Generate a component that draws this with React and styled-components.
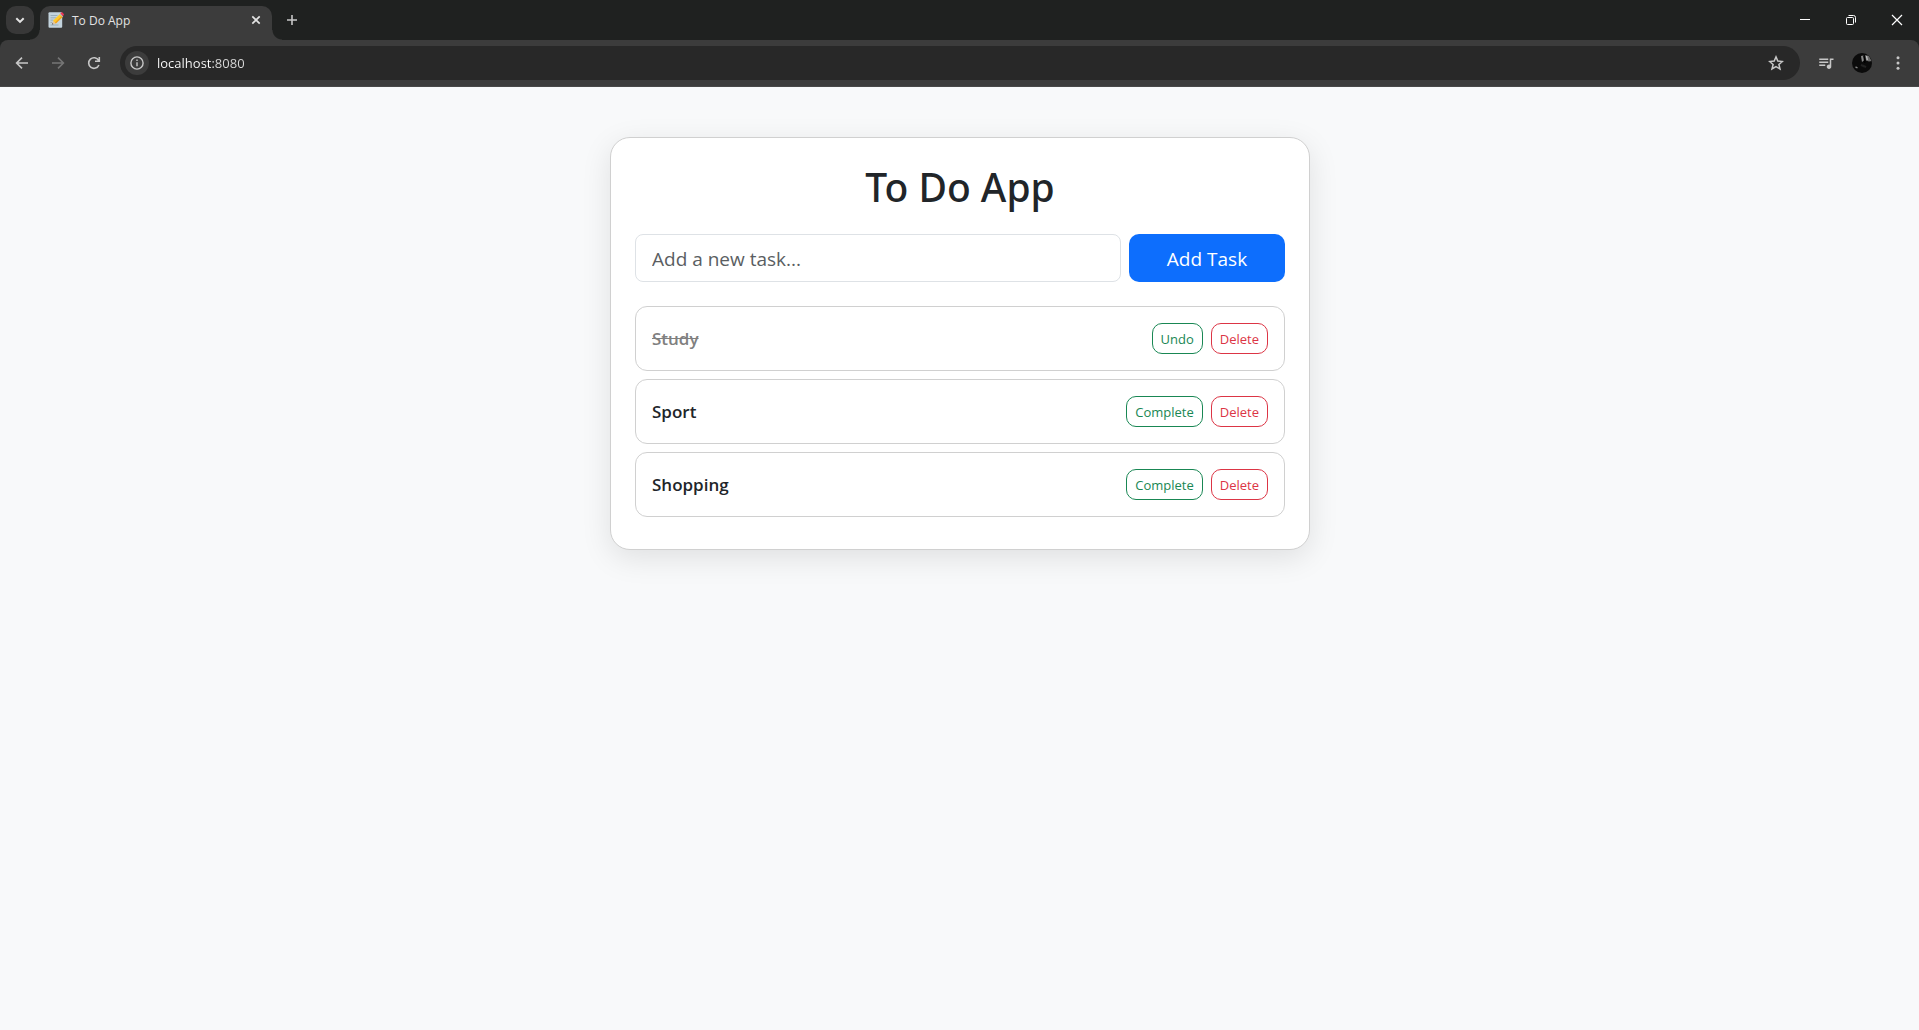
import React, { useState } from "react";
import styled, { createGlobalStyle, css } from "styled-components";
import { MdQueueMusic } from "react-icons/md";

const GlobalStyle = createGlobalStyle`
  *, *::before, *::after { box-sizing: border-box; }
  body {
    margin: 0;
    background: #f8f9fa;
    color: #212529;
    font-family: "Open Sans", "Noto Sans", sans-serif;
    font-size: 16px;
    line-height: 24px;
  }
  button, input { font-family: inherit; margin: 0; }
`;

const STRIP = "#1f2120";
const BAR = "#3c3c3c";

const plainButton = css`
  display: flex;
  align-items: center;
  justify-content: center;
  flex: none;
  padding: 0;
  border: 0;
  background: none;
  color: inherit;
`;

const Chrome = styled.header`
  background: ${STRIP};
  color: #e3e3e3;
`;

const TabStrip = styled.div`
  display: flex;
  height: 40px;
  padding: 6px 0 0 6px;
`;

const TabSearch = styled.button`
  ${plainButton}
  width: 28px;
  height: 28px;
  border-radius: 10px;
  background: #383838;
`;

const Tab = styled.div`
  position: relative;
  display: flex;
  align-items: center;
  gap: 8px;
  width: 232px;
  margin-left: 6px;
  padding: 0 8px 6px;
  border-radius: 10px 10px 0 0;
  background: ${BAR};
  font-size: 12px;
  line-height: 16px;

  &::before, &::after {
    content: "";
    position: absolute;
    bottom: 0;
    width: 10px;
    height: 10px;
  }
  &::before {
    right: 100%;
    background: radial-gradient(circle at 0 0, transparent 9px, ${BAR} 10px);
  }
  &::after {
    left: 100%;
    background: radial-gradient(circle at 100% 0, transparent 9px, ${BAR} 10px);
  }
`;

const TabTitle = styled.span`
  flex: 1;
  padding-top: 1px;
`;

const TabClose = styled.button`
  ${plainButton}
  width: 16px;
  height: 16px;
`;

const NewTab = styled.button`
  ${plainButton}
  width: 28px;
  height: 28px;
  margin-left: 6px;
  color: #c7c7c7;
`;

const WindowControls = styled.div`
  display: flex;
  margin: -6px 0 0 auto;
  color: #fff;
`;

const WindowButton = styled.button`
  ${plainButton}
  width: 46px;
  height: 40px;
`;

const Toolbar = styled.div`
  display: flex;
  align-items: center;
  height: 47px;
  padding: 0 7px 1px 8px;
  border-radius: 8px 8px 0 0;
  border-bottom: 1px solid #484848;
  background: ${BAR};
  color: #c7c7c7;
`;

const NavButtons = styled.div`
  display: flex;
  gap: 8px;
  margin-right: 12px;
`;

const IconButton = styled.button`
  ${plainButton}
  width: 28px;
  height: 28px;
  &:disabled { color: #757575; }
`;

const AddressBar = styled.form`
  display: flex;
  align-items: center;
  flex: 1;
  height: 34px;
  padding: 0 10px 0 5px;
  border-radius: 17px;
  background: #282828;
`;

const SiteInfo = styled.button`
  ${plainButton}
  width: 24px;
  height: 24px;
  border-radius: 50%;
  background: ${BAR};
`;

const Address = styled.input`
  flex: 1;
  min-width: 0;
  padding: 0 8px;
  border: 0;
  outline: 0;
  background: linear-gradient(90deg, #fff 64px, #dcdcdc 64px);
  background-clip: text;
  -webkit-text-fill-color: transparent;
  color: #e3e3e3;
  font-size: 13px;
  line-height: 20px;
`;

const ToolbarActions = styled.div`
  display: flex;
  gap: 8px;
  margin-left: 12px;
`;

const Page = styled.main`
  padding: 50px 16px 50px 17px;
`;

const Card = styled.section`
  max-width: 700px;
  margin: 0 auto;
  padding: 24px 24px 32px;
  border: 1px solid #d0d0d0;
  border-radius: 20px;
  background: #fff;
  box-shadow: 0 8px 30px rgba(0, 0, 0, 0.1);
`;

const Title = styled.h1`
  margin: 0;
  padding: 1px 0 23px;
  font-family: "Noto Sans", "Open Sans", sans-serif;
  font-size: 39px;
  font-weight: 500;
  line-height: 48px;
  text-align: center;
`;

const TaskForm = styled.form`
  display: flex;
  gap: 8px;
  margin-bottom: 24px;
`;

const TaskInput = styled.input`
  flex: 1;
  min-width: 0;
  height: 48px;
  padding: 9px 16px 7px;
  border: 1px solid #dee2e6;
  border-radius: 8px;
  background: #fff;
  color: #212529;
  font-size: 19px;
  line-height: 30px;
  &::placeholder { color: #5a5e62; opacity: 1; }
`;

const AddButton = styled.button`
  flex: 0 0 24%;
  padding: 10px 16px 8px;
  border: 0;
  border-radius: 10px;
  background: #0d6efd;
  color: #fff;
  font-size: 19px;
  line-height: 30px;
`;

const TaskList = styled.ul`
  display: flex;
  flex-direction: column;
  gap: 8px;
  margin: 0;
  padding: 0;
  list-style: none;
`;

const TaskRow = styled.li`
  display: flex;
  align-items: center;
  gap: 8px;
  padding: 16px;
  border: 1px solid #d0d0d0;
  border-radius: 12px;
`;

const TaskName = styled.span`
  flex: 1;
  font-size: 17px;
  font-weight: 600;
  color: ${(p) => (p.$done ? "#808080" : "#212529")};
  text-decoration: ${(p) => (p.$done ? "line-through" : "none")};
`;

const SmallButton = styled.button`
  padding: 5px 8px 3px;
  border: 1px solid ${(p) => p.$tone};
  border-radius: 10px;
  background: #fff;
  color: ${(p) => p.$tone};
  font-size: 13px;
  line-height: 21px;
`;

const Line = ({ size = 16, width = 1.6, children }) => (
  <svg width={size} height={size} viewBox="0 0 16 16" fill="none" stroke="currentColor" strokeWidth={width} aria-hidden="true">
    {children}
  </svg>
);

const Memo = () => (
  <svg width="16" height="16" viewBox="0 0 16 16" aria-hidden="true">
    <rect x="0.5" y="0.3" width="13.7" height="15.5" rx="1" fill="#c3d3dd" />
    <path d="M2.5 3.5h7M2.5 5.8h6M2.5 8.1h3M2.5 10.4h2M2.5 13h8" stroke="#93a9b6" strokeWidth="0.9" />
    <path d="M4 12.6l1-3.8 2.9 2.8z" fill="#e6c59c" />
    <path d="M4 12.6l.4-1.5 1.1 1.1z" fill="#37474f" />
    <path d="M5 8.8l7-6.9 2.8 2.8-6.9 6.9z" fill="#ffca28" />
    <path d="M6.9 10.6l7-6.9.9 1-6.9 6.9z" fill="#f0a020" />
    <path d="M11.6 2.3l.8-.8 2.8 2.8-.8.8z" fill="#b0bec5" />
    <path d="M12.3 1.5l.8-.8c.5-.5 1-.5 1.5 0l1 1c.5.5.5 1 0 1.5l-.8.8z" fill="#f0385a" />
  </svg>
);

const Avatar = () => (
  <svg width="20" height="20" viewBox="0 0 20 20" aria-hidden="true">
    <defs>
      <clipPath id="avatar"><circle cx="10" cy="10" r="10" /></clipPath>
      <filter id="soft"><feGaussianBlur stdDeviation="0.6" /></filter>
    </defs>
    <g clipPath="url(#avatar)">
      <rect width="20" height="20" fill="#0b0b0b" />
      <g filter="url(#soft)">
        <path d="M9 3l2.4-.6.4 5L10 9z" fill="#8a8a8a" />
        <path d="M13 2l4 1 2.5 5-2.5.5-3-1z" fill="#6c6c6c" />
        <path d="M14.5 3l.8 4" stroke="#c0c0c0" strokeWidth="1.3" />
        <path d="M11.8 3c1.6 3 .7 5 1 7" stroke="#000" strokeWidth="1.3" fill="none" />
        <path d="M3.5 13.8l2 1.2" stroke="#888" strokeWidth="1.4" />
        <path d="M9 12l5 2" stroke="#242424" strokeWidth="2" />
      </g>
    </g>
  </svg>
);

const GREEN = "#198754";
const RED = "#dc3545";

export default function App() {
  const [tasks, setTasks] = useState([
    { id: 1, name: "Study", done: true },
    { id: 2, name: "Sport", done: false },
    { id: 3, name: "Shopping", done: false },
  ]);
  const [draft, setDraft] = useState("");

  const add = (e) => {
    e.preventDefault();
    if (!draft.trim()) return;
    setTasks([...tasks, { id: Date.now(), name: draft.trim(), done: false }]);
    setDraft("");
  };
  const toggle = (id) => setTasks(tasks.map((t) => (t.id === id ? { ...t, done: !t.done } : t)));
  const remove = (id) => setTasks(tasks.filter((t) => t.id !== id));

  return (
    <>
      <GlobalStyle />
      <Chrome>
        <TabStrip>
          <TabSearch aria-label="Search tabs">
            <Line width={2}><path d="M4.3 6.2L8 9.9l3.7-3.7" /></Line>
          </TabSearch>
          <Tab>
            <Memo />
            <TabTitle>To Do App</TabTitle>
            <TabClose aria-label="Close tab">
              <Line width={1.7}><path d="M4.3 4.3l7.4 7.4M11.7 4.3l-7.4 7.4" /></Line>
            </TabClose>
          </Tab>
          <NewTab aria-label="New tab">
            <Line><path d="M8 3v10M3 8h10" /></Line>
          </NewTab>
          <WindowControls>
            <WindowButton aria-label="Minimize">
              <Line width={1}><path d="M4 7.5h10" /></Line>
            </WindowButton>
            <WindowButton aria-label="Restore">
              <Line width={1}>
                <rect x="4.5" y="5.5" width="7" height="7" rx="1" />
                <path d="M6.5 3.5h5a2 2 0 0 1 2 2v5" />
              </Line>
            </WindowButton>
            <WindowButton aria-label="Close">
              <Line width={1.2}><path d="M4 3l10 10M14 3L4 13" /></Line>
            </WindowButton>
          </WindowControls>
        </TabStrip>
        <Toolbar>
          <NavButtons>
            <IconButton aria-label="Back">
              <Line><path d="M14 8H3M8 2.6L2.6 8 8 13.4" /></Line>
            </IconButton>
            <IconButton aria-label="Forward" disabled>
              <Line><path d="M2 8h11M8 2.6L13.4 8 8 13.4" /></Line>
            </IconButton>
            <IconButton aria-label="Reload">
              <Line><path d="M12.9 10A5.3 5.3 0 1 1 12.6 5.4M13.3 2v4.2H9" /></Line>
            </IconButton>
          </NavButtons>
          <AddressBar onSubmit={(e) => e.preventDefault()}>
            <SiteInfo type="button" aria-label="View site information">
              <Line width={1.4}>
                <circle cx="8" cy="8" r="6.1" />
                <path d="M8 7.2v4M8 4.6v1.5" />
              </Line>
            </SiteInfo>
            <Address aria-label="Address" defaultValue="localhost:8080" />
            <IconButton type="button" aria-label="Bookmark this tab">
              <Line width={1.5}>
                <path d="M8 1.9l1.8 4.2 4.6.4-3.5 3 1.1 4.5L8 11.6 4 14l1.1-4.5-3.5-3 4.6-.4z" />
              </Line>
            </IconButton>
          </AddressBar>
          <ToolbarActions>
            <IconButton aria-label="Media controls"><MdQueueMusic size={18} /></IconButton>
            <IconButton aria-label="Profile"><Avatar /></IconButton>
            <IconButton aria-label="Menu">
              <svg width="16" height="16" viewBox="0 0 16 16" fill="currentColor" aria-hidden="true">
                <circle cx="8" cy="2.7" r="1.5" />
                <circle cx="8" cy="8" r="1.5" />
                <circle cx="8" cy="13.3" r="1.5" />
              </svg>
            </IconButton>
          </ToolbarActions>
        </Toolbar>
      </Chrome>
      <Page>
        <Card>
          <Title>To Do App</Title>
          <TaskForm onSubmit={add}>
            <TaskInput
              aria-label="New task"
              placeholder="Add a new task..."
              value={draft}
              onChange={(e) => setDraft(e.target.value)}
            />
            <AddButton type="submit">Add Task</AddButton>
          </TaskForm>
          <TaskList>
            {tasks.map((t) => (
              <TaskRow key={t.id}>
                <TaskName $done={t.done}>{t.name}</TaskName>
                <SmallButton $tone={GREEN} onClick={() => toggle(t.id)}>
                  {t.done ? "Undo" : "Complete"}
                </SmallButton>
                <SmallButton $tone={RED} onClick={() => remove(t.id)}>Delete</SmallButton>
              </TaskRow>
            ))}
          </TaskList>
        </Card>
      </Page>
    </>
  );
}
